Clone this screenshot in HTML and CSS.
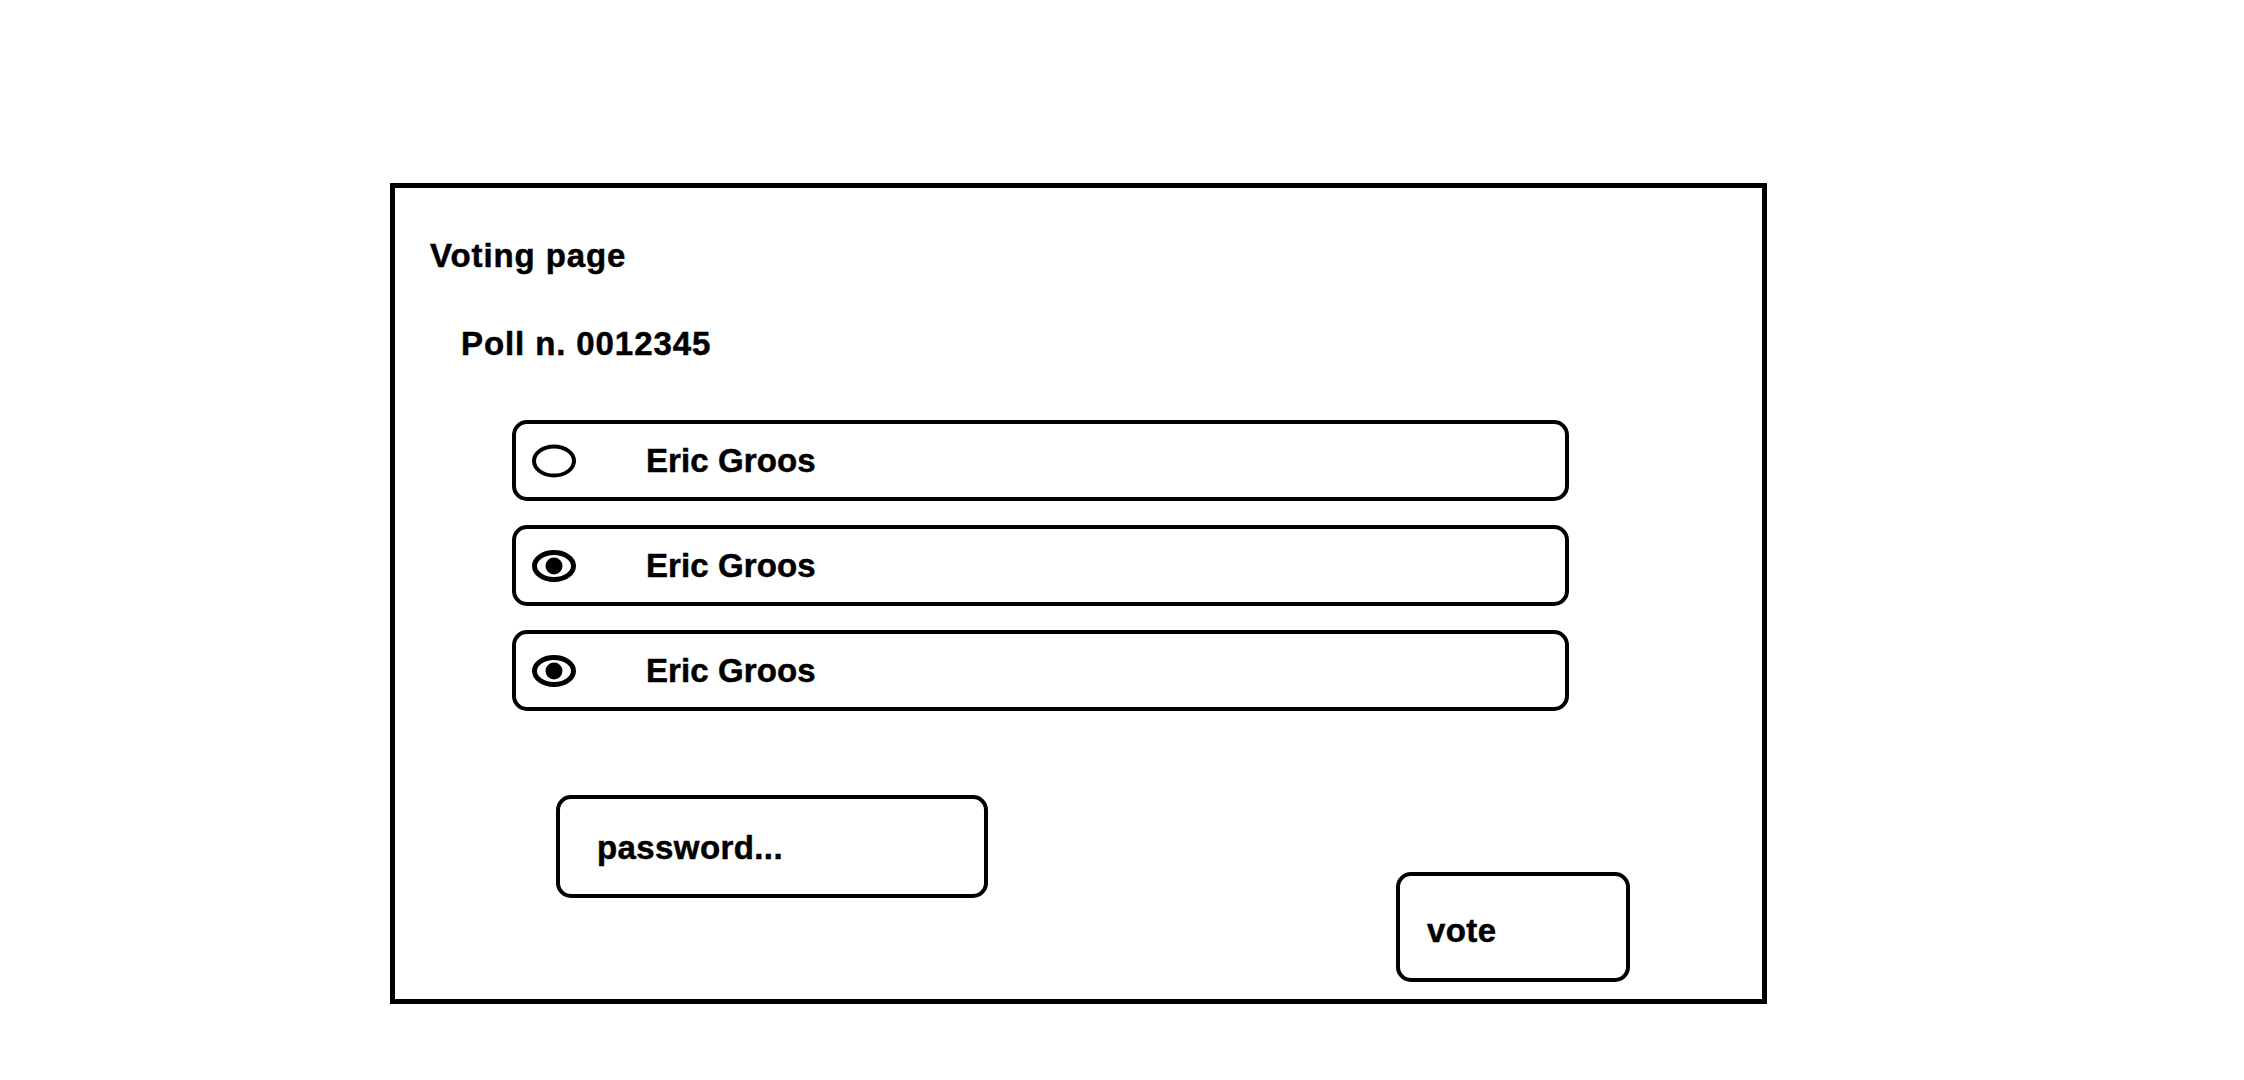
FILE: index.html
```html
<!DOCTYPE html>
<html>
<head>
<meta charset="utf-8">
<title>Voting page</title>
<link rel="stylesheet" href="styles.css">
</head>
<body>
<div class="frame">
  <h1 class="title">Voting page</h1>
  <h2 class="poll">Poll n. 0012345</h2>
  <div class="options">
    <label class="option">
      <svg class="radio" width="46" height="34" viewBox="0 0 46 34"><ellipse cx="23" cy="17" rx="20" ry="14.5" fill="none" stroke="#000" stroke-width="4"/></svg>
      <span class="name">Eric Groos</span>
    </label>
    <label class="option">
      <svg class="radio" width="46" height="34" viewBox="0 0 46 34"><ellipse cx="23" cy="17" rx="19.5" ry="13.5" fill="none" stroke="#000" stroke-width="5"/><circle cx="23" cy="17" r="8.5" fill="#000"/></svg>
      <span class="name">Eric Groos</span>
    </label>
    <label class="option">
      <svg class="radio" width="46" height="34" viewBox="0 0 46 34"><ellipse cx="23" cy="17" rx="19.5" ry="13.5" fill="none" stroke="#000" stroke-width="5"/><circle cx="23" cy="17" r="8.5" fill="#000"/></svg>
      <span class="name">Eric Groos</span>
    </label>
  </div>
  <div class="actions">
    <div class="password">password...</div>
    <div class="vote">vote</div>
  </div>
</div>
</body>
</html>
```
FILE: styles.css
```css
html, body {
  margin: 0;
  padding: 0;
  background: #fff;
}
body {
  font-family: "Liberation Sans", Arial, sans-serif;
  font-weight: bold;
  font-size: 33px;
  line-height: 1;
  color: #000;
  letter-spacing: 0.4px;
  -webkit-text-stroke: 0.5px #000;
}
.frame {
  box-sizing: border-box;
  margin: 183px 0 0 390px;
  width: 1377px;
  height: 821px;
  border: 5px solid #000;
  padding: 52px 0 17px 0;
  display: flex;
  flex-direction: column;
}
.title {
  margin: 0 0 0 35px;
  font-size: 33px;
  line-height: 32px;
  height: 32px;
  letter-spacing: 0.9px;
}
.poll {
  margin: 56px 0 0 66px;
  font-size: 33px;
  line-height: 32px;
  height: 32px;
  letter-spacing: 0.9px;
}
.options {
  margin: 60px 0 0 117px;
  width: 1057px;
  display: flex;
  flex-direction: column;
  gap: 24px;
}
.option {
  box-sizing: border-box;
  height: 81px;
  border: 4px solid #000;
  border-radius: 15px;
  display: flex;
  align-items: center;
  padding-left: 15px;
}
.radio {
  display: block;
  flex: none;
}
.name {
  margin-left: 69px;
  line-height: 32px;
  letter-spacing: 0.1px;
}
.actions {
  margin-top: 84px;
  display: flex;
  justify-content: space-between;
  align-items: flex-start;
}
.password {
  box-sizing: border-box;
  margin-left: 161px;
  width: 432px;
  height: 103px;
  border: 4px solid #000;
  border-radius: 15px;
  padding: 33px 0 0 37px;
  line-height: 32px;
}
.vote {
  box-sizing: border-box;
  margin: 77px 132px 0 0;
  width: 234px;
  height: 110px;
  border: 4px solid #000;
  border-radius: 15px;
  padding: 39px 0 0 27px;
  line-height: 32px;
}
```
